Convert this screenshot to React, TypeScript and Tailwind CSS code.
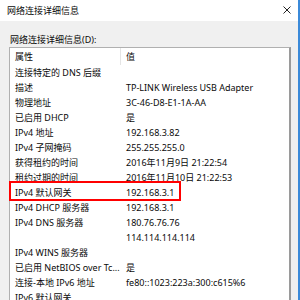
import React from 'react';

const ROWS: [string, string][] = [
  ['连接特定的 DNS 后缀', ''],
  ['描述', 'TP-LINK Wireless USB Adapter'],
  ['物理地址', '3C-46-D8-E1-1A-AA'],
  ['已启用 DHCP', '是'],
  ['IPv4 地址', '192.168.3.82'],
  ['IPv4 子网掩码', '255.255.255.0'],
  ['获得租约的时间', '2016年11月9日 21:22:54'],
  ['租约过期的时间', '2016年11月10日 21:22:53'],
  ['IPv4 默认网关', '192.168.3.1'],
  ['IPv4 DHCP 服务器', '192.168.3.1'],
  ['IPv4 DNS 服务器', '180.76.76.76'],
  ['', '114.114.114.114'],
  ['IPv4 WINS 服务器', ''],
  ['已启用 NetBIOS over Tc...', '是'],
  ['连接-本地 IPv6 地址', 'fe80::1023:223a:300:c615%6'],
  ['IPv6 默认网关', ''],
];

const HIGHLIGHT = 8;

export default function App() {
  return (
    <div
      className="w-[300px] h-[300px] overflow-hidden flex flex-col bg-[#f0f0f0] border-r-2 border-r-[#3b8ad9] text-[9px] text-[#0a0a0a]"
      style={{ fontFamily: '"Noto Sans", "Noto Sans CJK SC", sans-serif' }}
    >
      {/* title bar */}
      <div className="h-[21px] shrink-0 bg-white flex items-center justify-between pl-[7px] pr-[7px]">
        <span className="leading-none">网络连接详细信息</span>
        <svg width="8" height="8" viewBox="0 0 8 8" className="mt-[-1px]">
          <path d="M0.5 0.5 L7.5 7.5 M7.5 0.5 L0.5 7.5" stroke="#222" strokeWidth="1" />
        </svg>
      </div>

      {/* body */}
      <div className="flex-1 flex flex-col pl-[9px] pr-[7px] pt-[11px]">
        <div className="h-[15px] leading-[15px] pl-[1px]">网络连接详细信息(D):</div>
        <div className="flex-1 bg-white border border-[#b0b0b0] border-r-[#9a9a9a] border-r-2 border-b-0">
          <div className="h-[17px] flex items-center">
            <div className="w-[111px] pl-[5px] border-r border-[#e5e5e5] h-full flex items-center">属性</div>
            <div className="pl-[5px]">值</div>
          </div>
          {ROWS.map(([k, v], i) => (
            <div key={i} className="relative h-[15px] flex items-center whitespace-nowrap">
              <div className="w-[111px] pl-[5px] leading-[15px]">{k}</div>
              <div className="pl-[5px] leading-[15px]">{v}</div>
              {i === HIGHLIGHT && (
                <div className="absolute left-[-1px] top-[-4px] w-[172px] h-[20px] border-[2px] border-[#ff0000]" />
              )}
            </div>
          ))}
        </div>
      </div>
    </div>
  );
}
